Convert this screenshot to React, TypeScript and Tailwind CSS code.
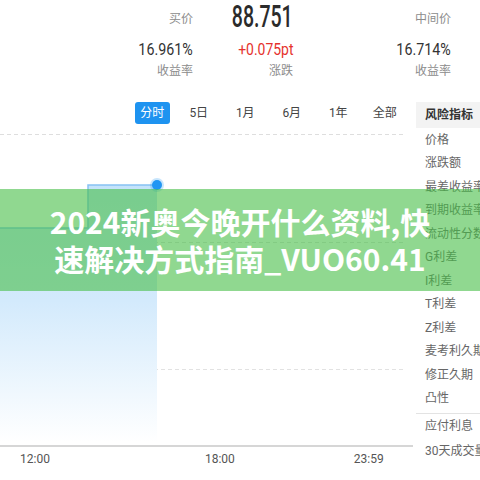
const tabs = ["分时", "5日", "1月", "6月", "1年", "全部"];

const risk = ["价格", "涨跌额", "最差收益率", "到期收益率", "流动性分数", "G利差", "I利差", "T利差", "Z利差", "麦考利久期", "修正久期", "凸性"];

function Chart() {
  return (
    <svg width="416" height="324" viewBox="0 0 416 324" className="block">
      <defs>
        <linearGradient id="area" x1="0" y1="61" x2="0" y2="318" gradientUnits="userSpaceOnUse">
          <stop offset="0" stopColor="#c4e3fb" />
          <stop offset="0.45" stopColor="#d3eafc" />
          <stop offset="1" stopColor="#ffffff" />
        </linearGradient>
      </defs>
      <line x1="0" y1="10.5" x2="404" y2="10.5" stroke="#dedede" strokeDasharray="4 3" />
      <line x1="0" y1="118.5" x2="404" y2="118.5" stroke="#dedede" strokeDasharray="4 3" />
      <line x1="0" y1="245.5" x2="404" y2="245.5" stroke="#e2e2e2" strokeDasharray="4 3" />
      <path d="M0 104 L88 104 L88 61 L157 61 L157 318 L0 318 Z" fill="url(#area)" />
      <path d="M0 104 L88 104 L88 61 L157 61" fill="none" stroke="#86c2f4" strokeWidth="1.5" />
      <circle cx="157" cy="61" r="7" fill="#2196f3" opacity="0.25" />
      <circle cx="157" cy="61" r="5" fill="#2196f3" />
      <line x1="0" y1="322" x2="413" y2="322" stroke="#d6d6d6" strokeWidth="2" />
    </svg>
  );
}

export default function App() {
  return (
    <div className="relative w-[480px] h-[480px] overflow-hidden bg-white font-['Roboto','Noto_Sans_CJK_SC',sans-serif]">
      {/* quote header */}
      <div className="flex">
        <div className="w-[193px] flex flex-col items-end">
          <div className="h-[36px] pt-[2px] flex items-center text-[12px] text-[#8c8c8c]">买价</div>
          <div className="h-[28px] flex items-center">
            <span className="inline-block origin-right scale-x-[0.84] text-[17px] text-[#333]">16.961%</span>
          </div>
          <div className="h-[14px] leading-[14px] text-[12px] text-[#8c8c8c]">收益率</div>
        </div>
        <div className="w-[100px] flex flex-col items-end">
          <div className="h-[36px] pb-[3px] flex items-center">
            <span className="inline-block origin-right scale-x-[0.63] text-[31px] leading-none font-medium text-[#2b2b2b]">88.751</span>
          </div>
          <div className="h-[28px] flex items-center">
            <span className="inline-block origin-right scale-x-[0.82] text-[17px] text-[#e5322d]">+0.075pt</span>
          </div>
          <div className="h-[14px] leading-[14px] text-[12px] text-[#8c8c8c]">涨跌</div>
        </div>
        <div className="w-[158px] flex flex-col items-end">
          <div className="h-[36px] pt-[2px] flex items-center text-[12px] text-[#8c8c8c]">中间价</div>
          <div className="h-[28px] flex items-center">
            <span className="inline-block origin-right scale-x-[0.84] text-[17px] text-[#333]">16.714%</span>
          </div>
          <div className="h-[14px] leading-[14px] text-[12px] text-[#8c8c8c]">收益率</div>
        </div>
      </div>

      <div className="mt-[24px] flex">
        {/* chart side */}
        <div className="w-[416px]">
          <div className="h-[22px] flex pl-[129px]">
            {tabs.map((t, i) => (
              <div key={t} className="w-[46.5px] flex items-center justify-center text-[12px]">
                {i === 0 ? (
                  <span className="w-[35px] h-[22px] rounded-[3px] bg-[#1e93f0] text-white flex items-center justify-center">{t}</span>
                ) : (
                  <span className="text-[#444]">{t}</span>
                )}
              </div>
            ))}
          </div>
          <Chart />
          <div className="mt-[4px] flex h-[14px] leading-[14px] text-[12px] text-[#555]">
            <span className="ml-[20px]">12:00</span>
            <span className="ml-[155px]">18:00</span>
            <span className="ml-[119px]">23:59</span>
          </div>
        </div>

        {/* risk indicator list */}
        <div className="w-[64px] text-[12px] whitespace-nowrap overflow-hidden">
          <div className="h-[26px] bg-[#f3f3f3] pl-[9px] flex items-center font-bold text-[#333]">风险指标</div>
          {risk.map((r) => (
            <div key={r} className="h-[23.5px] pl-[9px] flex items-center text-[#666]">{r}</div>
          ))}
          <div className="mt-[3px] border-t border-[#e3e3e3]">
            <div className="h-[24px] pl-[9px] flex items-center text-[#666]">应付利息</div>
            <div className="h-[25px] pl-[9px] flex items-center text-[#666]">30天成交量</div>
          </div>
        </div>
      </div>

      {/* title banner */}
      <div className="absolute left-0 right-0 top-[189px] h-[102px] bg-[rgba(70,190,70,0.6)] flex flex-col items-center justify-center text-white font-bold text-[30px] leading-[37px] font-['Noto_Sans_CJK_SC',sans-serif]">
        <div>2024新奥今晚开什么资料,快</div>
        <div>速解决方式指南_VUO60.41</div>
      </div>
    </div>
  );
}
